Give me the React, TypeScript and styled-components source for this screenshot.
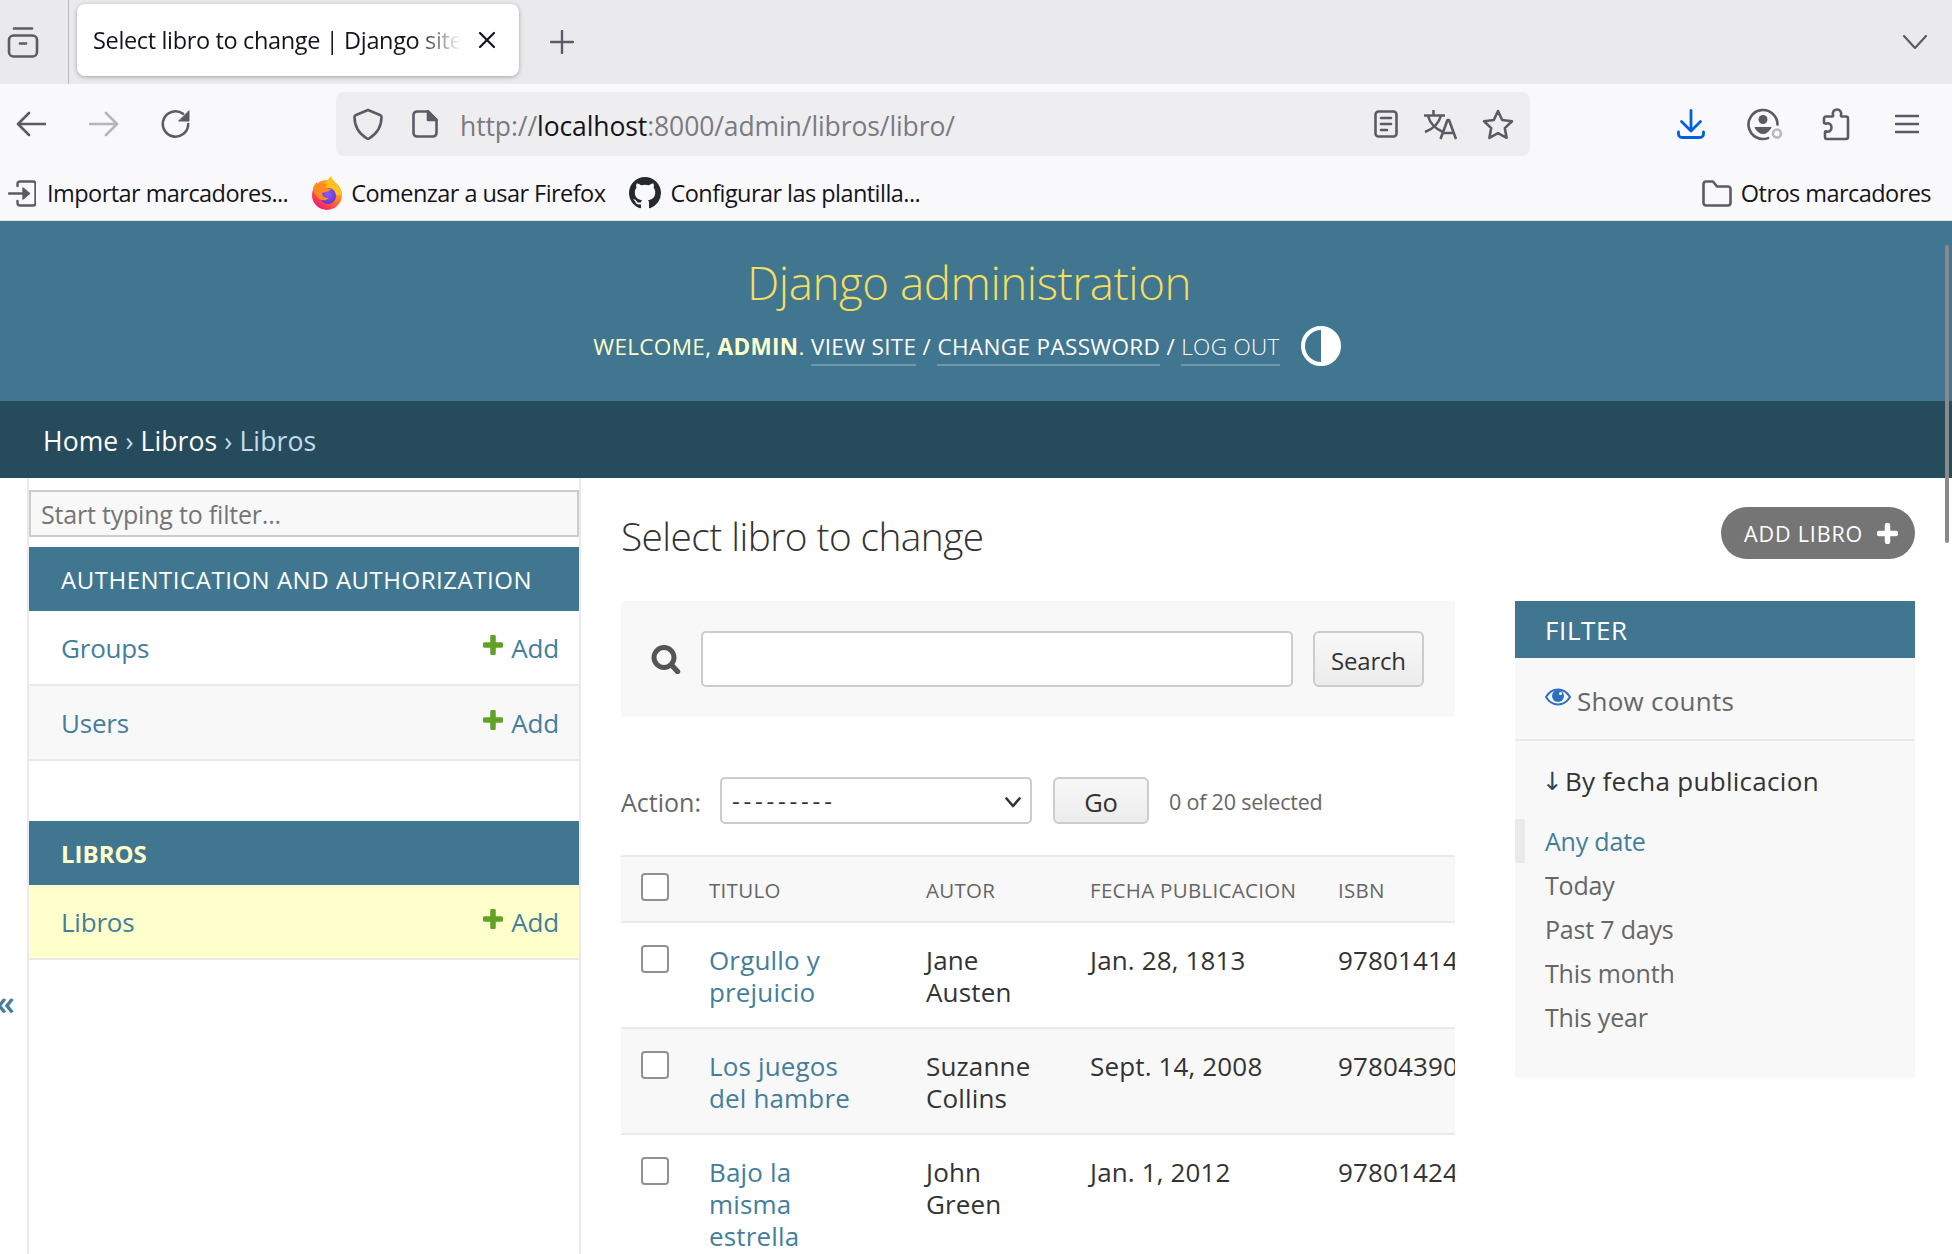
import React from "react";
import styled, { createGlobalStyle } from "styled-components";

const FONT = `"Open Sans", "Noto Sans", sans-serif`;

const GlobalStyle = createGlobalStyle`
  html, body {
    margin: 0;
    padding: 0;
    background: #fff;
    overflow: hidden;
  }
  * {
    box-sizing: border-box;
  }
  body {
    font-family: ${FONT};
  }
`;

const Page = styled.div`
  position: relative;
  width: 1952px;
  height: 1254px;
  overflow: hidden;
  display: flex;
  flex-direction: column;
`;

/* browser chrome */
const TabStrip = styled.div`
  height: 84px;
  flex: none;
  background: #eaeaed;
  display: flex;
  align-items: center;
  padding-left: 7px;
  color: #5b5b66;
`;

const TabDivider = styled.div`
  width: 1px;
  height: 84px;
  background: #b8b8bd;
  margin: 0 8px 0 29px;
`;

const Tab = styled.div`
  width: 442px;
  height: 72px;
  align-self: flex-start;
  margin-top: 4px;
  background: #fff;
  border-radius: 8px;
  box-shadow: 0 1px 4px rgba(0, 0, 0, 0.3);
  display: flex;
  align-items: center;
  padding-left: 16px;
  color: #15141a;
`;

const TabTitle = styled.span`
  width: 368px;
  margin-right: 17px;
  font-size: 23.5px;
  letter-spacing: -0.35px;
  white-space: nowrap;
  overflow: hidden;
  mask-image: linear-gradient(to right, #000 88%, transparent 100%);
`;

const PlusSlot = styled.div`
  margin-left: 31px;
  display: flex;
`;

const ChevronSlot = styled.div`
  margin-left: auto;
  margin-right: 25px;
  display: flex;
`;

const Toolbar = styled.div`
  height: 80px;
  flex: none;
  background: #f9f9fb;
  display: flex;
  align-items: center;
  padding-left: 16px;
  color: #5b5b66;
`;

const IconSlot = styled.div<{ $left?: number }>`
  display: flex;
  flex: none;
  margin-left: ${(p) => p.$left ?? 0}px;
`;

const UrlBar = styled.div`
  width: 1194px;
  height: 64px;
  margin-left: 145px;
  background: #eeeef0;
  border-radius: 8px;
  display: flex;
  align-items: center;
  padding-left: 17px;
`;

const UrlText = styled.div`
  margin-left: 22px;
  font-size: 26.5px;
  letter-spacing: -0.1px;
  color: #7a7a82;
  white-space: nowrap;
  padding-top: 3px;
  b {
    font-weight: 400;
    color: #15141a;
  }
`;

const UrlActions = styled.div`
  margin-left: auto;
  display: flex;
  align-items: center;
  padding-right: 16px;
  gap: 25px;
`;

const BookmarksBar = styled.div`
  height: 57px;
  flex: none;
  background: #f9f9fb;
  border-bottom: 1px solid #e0e0e2;
  display: flex;
  align-items: center;
  padding: 2px 21px 0 8px;
  color: #15141a;
`;

const Bookmark = styled.div<{ $left: number; $gap: number }>`
  display: flex;
  align-items: center;
  margin-left: ${(p) => p.$left}px;
  gap: ${(p) => p.$gap}px;
  font-size: 23.5px;
  letter-spacing: -0.55px;
  white-space: nowrap;
`;

const BookmarkRight = styled(Bookmark)`
  margin-left: auto;
`;

const MutedIcon = styled.span`
  display: flex;
  color: #5b5b66;
`;

/* django header */
const Header = styled.header`
  height: 180px;
  flex: none;
  background: #417690;
  display: flex;
  flex-direction: column;
  align-items: center;
  padding-right: 14px;
`;

const Branding = styled.h1`
  margin: 31px 0 0;
  font-size: 45.7px;
  line-height: 60px;
  font-weight: 300;
  letter-spacing: -0.45px;
  color: #f5dd5d;
`;

const UserTools = styled.div`
  margin: 12px 4px 0 0;
  display: flex;
  align-items: center;
  height: 44px;
  color: #ffc;
`;

const UserText = styled.span`
  font-size: 22.5px;
  letter-spacing: 0.35px;
  text-transform: uppercase;
  white-space: pre;
`;

const Strong = styled.strong`
  font-weight: 700;
`;

const UserLink = styled.a<{ $light?: boolean }>`
  color: #fff;
  font-weight: ${(p) => (p.$light ? 300 : 400)};
  border-bottom: 2px solid rgba(255, 255, 255, 0.25);
  padding-bottom: 2px;
`;

const Slash = styled.span`
  color: #fff;
`;

const ThemeToggle = styled.div`
  display: flex;
  margin-left: 21px;
`;

const Breadcrumbs = styled.nav`
  height: 77px;
  flex: none;
  background: #264b5d;
  display: flex;
  align-items: center;
  padding: 2px 0 0 43px;
  font-size: 26.5px;
  letter-spacing: 0.12px;
  color: #c4dce8;
`;

const CrumbTrail = styled.span`
  white-space: pre;
`;

const Crumb = styled.a`
  color: #fff;
`;

/* body */
const Body = styled.div`
  flex: 1;
  display: flex;
  min-height: 0;
`;

const ToggleColumn = styled.div`
  width: 27px;
  flex: none;
  padding-top: 508px;
  color: #447e9b;
  font-size: 34px;
  font-weight: 600;
  line-height: 32px;
  overflow: hidden;
`;

const ToggleGlyph = styled.span`
  display: block;
  margin-left: -4px;
`;

const Sidebar = styled.nav`
  width: 554px;
  flex: none;
  border-left: 2px solid #eaeaea;
  border-right: 2px solid #eaeaea;
  padding-top: 12px;
`;

const FilterInput = styled.input`
  display: block;
  width: 100%;
  height: 47px;
  padding: 0 10px;
  background: #f8f8f8;
  border: 2px solid #ccc;
  font-family: ${FONT};
  font-size: 25px;
  letter-spacing: -0.2px;
  color: #333;
  outline: none;
  &::placeholder {
    color: #757575;
    opacity: 1;
  }
`;

const AppModule = styled.section`
  margin-top: 10px;
  & + & {
    margin-top: 60px;
  }
`;

const ModuleCaption = styled.div<{ $current?: boolean }>`
  height: 64px;
  display: flex;
  align-items: center;
  padding-left: 32px;
  background: #417690;
  font-size: 24px;
  letter-spacing: ${(p) => (p.$current ? "0" : "0.52px")};
  font-weight: ${(p) => (p.$current ? 700 : 400)};
  color: ${(p) => (p.$current ? "#ffc" : "#fff")};
  text-transform: uppercase;
  white-space: nowrap;
`;

const ModuleRow = styled.div<{ $bg: string }>`
  height: 75px;
  display: flex;
  align-items: center;
  justify-content: space-between;
  padding: 0 20px 0 32px;
  border-bottom: 2px solid #eaeaea;
  background: ${(p) => p.$bg};
  font-size: 26px;
  letter-spacing: -0.2px;
  color: #447e9b;
`;

const AddLink = styled.span`
  display: flex;
  align-items: center;
  gap: 8px;
  padding-top: 1px;
  svg {
    margin-top: -7px;
  }
`;

const Content = styled.main`
  flex: 1;
  min-width: 0;
  padding: 0 37px 0 40px;
`;

const TitleRow = styled.div`
  height: 123px;
  display: flex;
  justify-content: space-between;
  align-items: flex-start;
`;

const PageTitle = styled.h2`
  margin: 33px 0 0;
  font-size: 38.8px;
  line-height: 50px;
  font-weight: 300;
  letter-spacing: -0.55px;
  color: #333;
`;

const AddButton = styled.a`
  margin-top: 29px;
  width: 194px;
  height: 52px;
  border-radius: 26px;
  background: #757575;
  color: #fff;
  font-size: 21.5px;
  letter-spacing: 0.85px;
  display: flex;
  align-items: center;
  padding-left: 23px;
  gap: 14px;
  white-space: nowrap;
`;

const Columns = styled.div`
  display: flex;
  gap: 60px;
  align-items: flex-start;
`;

const ChangeList = styled.div`
  width: 834px;
  flex: none;
  overflow: hidden;
`;

const SearchPanel = styled.div`
  height: 116px;
  background: #f8f8f8;
  display: flex;
  align-items: center;
  padding-left: 30px;
`;

const SearchInput = styled.input`
  width: 592px;
  height: 56px;
  margin-left: 20px;
  background: #fff;
  border: 2px solid #ccc;
  border-radius: 5px;
  outline: none;
`;

const GradientButton = styled.button<{ $width: number; $height: number; $size: number }>`
  width: ${(p) => p.$width}px;
  height: ${(p) => p.$height}px;
  border: 2px solid #ccc;
  border-radius: 6px;
  background: linear-gradient(to bottom, #f8f8f8, #ececec);
  font-family: ${FONT};
  font-size: ${(p) => p.$size}px;
  letter-spacing: -0.2px;
  color: #333;
  padding: 2px 0 0;
`;

const SearchButton = styled(GradientButton)`
  margin-left: 20px;
`;

const ActionsRow = styled.div`
  margin-top: 60px;
  height: 47px;
  display: flex;
  align-items: center;
  font-size: 25px;
  letter-spacing: 0;
  color: #666;
`;

const ActionLabel = styled.span`
  padding-top: 2px;
`;

const SelectWrap = styled.div`
  position: relative;
  margin-left: 19px;
  margin-right: 21px;
  width: 312px;
  height: 47px;
`;

const ActionSelect = styled.select`
  appearance: none;
  width: 100%;
  height: 100%;
  padding: 0 10px;
  background: #fff;
  border: 2px solid #ccc;
  border-radius: 5px;
  font-family: ${FONT};
  font-size: 24px;
  letter-spacing: 3.8px;
  color: #333;
  outline: none;
`;

const SelectChevron = styled.div`
  position: absolute;
  top: 20px;
  right: 11px;
  display: flex;
  pointer-events: none;
`;

const SelectionCount = styled.span`
  margin-left: 20px;
  padding-top: 2px;
  font-size: 21.5px;
  letter-spacing: -0.2px;
`;

const Table = styled.table`
  margin-top: 31px;
  width: 1100px;
  table-layout: fixed;
  border-collapse: collapse;
  border-top: 2px solid #eaeaea;
`;

const HeadRow = styled.tr`
  height: 66px;
  background: #f8f8f8;
  border-bottom: 2px solid #eaeaea;
`;

const Th = styled.th`
  padding: 2px 0 0 20px;
  text-align: left;
  font-size: 20.5px;
  font-weight: 400;
  letter-spacing: 0.3px;
  color: #666;
  white-space: nowrap;
`;

const CheckCell = styled.th`
  padding: 0 0 0 20px;
  text-align: left;
  vertical-align: top;
`;

const Row = styled.tr<{ $even: boolean }>`
  background: ${(p) => (p.$even ? "#f8f8f8" : "#fff")};
  border-bottom: 2px solid #eaeaea;
`;

const Td = styled.td`
  padding: 21px 0 19px 20px;
  vertical-align: top;
  font-size: 26px;
  line-height: 32px;
  letter-spacing: 0.15px;
  color: #333;
  white-space: nowrap;
`;

const TitleLink = styled.a`
  color: #447e9b;
`;

const Checkbox = styled.input.attrs({ type: "checkbox" })<{ $top: number }>`
  appearance: none;
  display: block;
  width: 28px;
  height: 28px;
  margin: ${(p) => p.$top}px 0 0;
  background: #fff;
  border: 2px solid #8f8f9d;
  border-radius: 4px;
`;

const FilterPanel = styled.aside`
  width: 400px;
  height: 477px;
  flex: none;
  background: #f8f8f8;
`;

const FilterHeading = styled.div`
  height: 57px;
  display: flex;
  align-items: center;
  padding-left: 30px;
  background: #417690;
  color: #fff;
  font-size: 26px;
  letter-spacing: 0.6px;
`;

const ShowCounts = styled.div`
  height: 83px;
  display: flex;
  align-items: center;
  gap: 6px;
  padding: 5px 0 0 30px;
  border-bottom: 2px solid #eaeaea;
  font-size: 26px;
  letter-spacing: 0.25px;
  color: #666;
  svg {
    margin-top: -8px;
  }
`;

const FilterTitle = styled.div`
  height: 78px;
  display: flex;
  align-items: center;
  padding: 2px 0 0 30px;
  font-size: 26px;
  letter-spacing: 0.3px;
  color: #333;
  white-space: pre;
`;

const SortArrow = styled.span`
  width: 23px;
  color: #264b5d;
  font-family: "DejaVu Sans", sans-serif;
  font-size: 25px;
  margin-left: -3px;
`;

const FilterItem = styled.div<{ $selected?: boolean }>`
  height: 44px;
  display: flex;
  align-items: center;
  padding-left: ${(p) => (p.$selected ? 20 : 30)}px;
  border-left: ${(p) => (p.$selected ? "10px solid #eaeaea" : "0")};
  font-size: 25px;
  letter-spacing: -0.2px;
  color: ${(p) => (p.$selected ? "#447e9b" : "#666")};
`;

const Scrollbar = styled.div`
  position: absolute;
  right: 3px;
  top: 245px;
  width: 4px;
  height: 298px;
  background: #8a8a8a;
  border-radius: 2px;
`;

/* drawings */
const stroke = {
  fill: "none",
  stroke: "currentColor",
  strokeWidth: 2.6,
  strokeLinecap: "round" as const,
  strokeLinejoin: "round" as const,
};

const ViewIcon = () => (
  <svg width="32" height="32" viewBox="0 0 32 32" {...stroke}>
    <path d="M7 2.5h18" />
    <rect x="2" y="9.5" width="28" height="21" rx="4.5" />
    <path d="M13 17.5h6" />
  </svg>
);

const CloseIcon = () => (
  <svg width="18" height="18" viewBox="0 0 18 18" {...stroke} strokeWidth={2.2}>
    <path d="M2 2l14 14M16 2L2 16" />
  </svg>
);

const PlusIcon = () => (
  <svg width="24" height="24" viewBox="0 0 24 24" {...stroke} strokeWidth={2.4}>
    <path d="M12 1v22M1 12h22" />
  </svg>
);

const ChevronDown = () => (
  <svg width="24" height="14" viewBox="0 0 24 14" {...stroke} strokeWidth={2.2}>
    <path d="M1 1l11 12L23 1" />
  </svg>
);

const ArrowLeft = () => (
  <svg width="30" height="26" viewBox="0 0 30 26" {...stroke}>
    <path d="M2 13h27M13 2L2 13l11 11" />
  </svg>
);

const ArrowRight = () => (
  <svg width="30" height="26" viewBox="0 0 30 26" {...stroke} stroke="#b5b5bb">
    <path d="M28 13H1M17 2l11 11-11 11" />
  </svg>
);

const ReloadIcon = () => (
  <svg width="30" height="30" viewBox="0 0 30 30" {...stroke}>
    <path d="M27.200 15A12.700 12.700 0 1 1 22 4.700" />
    <path d="M28 2v10H18z" fill="currentColor" strokeWidth="1" />
  </svg>
);

const ShieldIcon = () => (
  <svg width="30" height="32" viewBox="0 0 30 32" {...stroke}>
    <path d="M15 2l12 5c1 .4 1.500 1 1.500 2 0 10-5 17-12.500 21.500-.6.300-1.400.300-2 0C6.500 26 1.500 19 1.500 9c0-1 .5-1.600 1.500-2z" />
  </svg>
);

const PageIcon = () => (
  <svg width="26" height="28" viewBox="0 0 26 28" {...stroke}>
    <path d="M5 1.500h11l8.500 8.500v13a3.500 3.500 0 0 1-3.500 3.500H5A3.500 3.500 0 0 1 1.500 23V5A3.500 3.500 0 0 1 5 1.500z" />
    <path d="M16 1.500v8.500h8.500z" fill="currentColor" />
  </svg>
);

const ReaderIcon = () => (
  <svg width="24" height="28" viewBox="0 0 24 28" {...stroke}>
    <rect x="1.500" y="1.500" width="21" height="25" rx="3" />
    <path d="M7 8h10M7 14h10M7 20h6" />
  </svg>
);

const TranslateIcon = () => (
  <svg width="34" height="31" viewBox="0 0 34 31" {...stroke} strokeLinecap="butt">
    <path d="M1 6.500h21M10.500 1v5.500M18 6.500C16 14 10 20 2 23M5 7c2 7 8 13 15 16" />
    <path d="M17.500 30l7-19h1.500l7 19M20 24h11" />
  </svg>
);

const StarIcon = () => (
  <svg width="32" height="31" viewBox="0 0 32 31" {...stroke}>
    <path d="M16 2l4.200 9 9.800 1.300-7.200 6.800 1.800 9.700L16 24.100l-8.600 4.700 1.800-9.700L2 12.300 11.800 11z" />
  </svg>
);

const DownloadIcon = () => (
  <svg width="28" height="30" viewBox="0 0 28 30" {...stroke} stroke="#0061e0" strokeWidth={2.8}>
    <path d="M14 1.500V22M4.500 12.500L14 22l9.500-9.500" />
    <path d="M1.500 23v2a3.500 3.500 0 0 0 3.500 3.500h18a3.500 3.500 0 0 0 3.500-3.500v-2" />
  </svg>
);

const ProfileIcon = () => (
  <svg width="38" height="35" viewBox="0 0 38 35" {...stroke}>
    <path d="M21 31.100A14.500 14.500 0 1 1 30.500 17.500" />
    <circle cx="16" cy="12.500" r="4.500" fill="currentColor" stroke="none" />
    <path d="M7.500 20h17c0 0 0 .5-.5 1.500C22 25 19 27 16 27s-6-2-8-5.500c-.5-1-.5-1.500-.5-1.500z" fill="currentColor" stroke="none" />
    <circle cx="30" cy="26.500" r="4" stroke="#b9b9bf" strokeWidth="2.600" />
  </svg>
);

const PuzzleIcon = () => (
  <svg width="28" height="33" viewBox="0 0 28 33" {...stroke}>
    <path d="M2 10.500a2 2 0 0 1 2-2h6c1 0 1.500-.8 1-1.700C10.200 4.500 12 1.500 15 1.500s4.800 3 4 5.300c-.4.900 0 1.700 1 1.700h4a2 2 0 0 1 2 2V29a2 2 0 0 1-2 2H5a2 2 0 0 1-2-2v-4.500c0-1 .8-1.300 1.700-1C7 24.300 9.500 22.500 9.500 19.500S7 14.700 4.700 15.500c-.9.300-2.700 0-2.700-1z" />
  </svg>
);

const MenuIcon = () => (
  <svg width="24" height="20" viewBox="0 0 24 20" {...stroke}>
    <path d="M1 2h22M1 10h22M1 18h22" />
  </svg>
);

const ImportIcon = () => (
  <svg width="28" height="27" viewBox="0 0 28 27" {...stroke} strokeWidth={2.4}>
    <path d="M9.500 6V4a2.500 2.500 0 0 1 2.500-2.500h13A2.500 2.500 0 0 1 27.500 4v19a2.500 2.500 0 0 1-2.500 2.500H12A2.500 2.500 0 0 1 9.500 23v-2" />
    <path d="M1 13.500h14" />
    <path d="M15 8l6.500 5.500L15 19z" fill="currentColor" strokeWidth="1.500" />
  </svg>
);

const FirefoxLogo = () => (
  <svg width="32" height="34" viewBox="0 0 32 34">
    <defs>
      <linearGradient id="foxBody" x1="0.85" y1="0.1" x2="0.2" y2="0.95">
        <stop offset="0" stopColor="#ffbd1f" />
        <stop offset="0.45" stopColor="#ff7a2f" />
        <stop offset="0.8" stopColor="#ff3750" />
        <stop offset="1" stopColor="#e31587" />
      </linearGradient>
      <radialGradient id="foxCore" cx="0.5" cy="0.4" r="0.7">
        <stop offset="0" stopColor="#9059ff" />
        <stop offset="1" stopColor="#5b2fc4" />
      </radialGradient>
    </defs>
    <circle cx="16" cy="19" r="15" fill="url(#foxBody)" />
    <path d="M13 8C15 5 18 3 20 0c1 3 3 5 6 8 3 3 5 7 5 11H18z" fill="#ffc020" />
    <circle cx="17" cy="20" r="8" fill="url(#foxCore)" />
    <path d="M2 12c1-3 3-5 4-6 0 2 1 3 3 4 2-2 5-3 8-2-2 1-3 3-3 4 3 0 5 1 6 2-3 2-7 2-9 3 0 3 3 5 7 5-3 3-8 3-11 0-3-3-4-6-5-10z" fill="#ff8a1f" />
  </svg>
);

const GithubLogo = () => (
  <svg width="32" height="32" viewBox="0 0 16 16" fill="#24292f">
    <path d="M8 0C3.580 0 0 3.580 0 8c0 3.540 2.290 6.530 5.470 7.590.4.070.55-.17.55-.38 0-.19-.010-.82-.010-1.490-2.010.37-2.530-.49-2.690-.94-.09-.23-.48-.94-.82-1.130-.28-.15-.68-.52-.010-.53.63-.010 1.080.58 1.230.82.720 1.210 1.870.87 2.330.66.070-.52.280-.87.510-1.070-1.780-.2-3.640-.89-3.640-3.950 0-.87.310-1.590.82-2.150-.080-.2-.36-1.020.080-2.120 0 0 .67-.21 2.200.82.640-.18 1.320-.27 2-.27s1.360.09 2 .27c1.530-1.040 2.200-.82 2.200-.82.440 1.100.160 1.920.080 2.120.51.560.82 1.270.82 2.150 0 3.070-1.870 3.750-3.650 3.950.29.25.54.73.54 1.480 0 1.070-.010 1.930-.010 2.200 0 .21.150.46.550.38A8.010 8.010 0 0 0 16 8c0-4.420-3.580-8-8-8z" />
  </svg>
);

const FolderIcon = () => (
  <svg width="30" height="27" viewBox="0 0 30 27" {...stroke}>
    <path d="M4 1.500h7l4 5h11a2.500 2.500 0 0 1 2.500 2.500v14a2.500 2.500 0 0 1-2.500 2.500H4A2.500 2.500 0 0 1 1.500 23V4A2.500 2.500 0 0 1 4 1.500z" />
  </svg>
);

const ThemeIcon = () => (
  <svg width="40" height="40" viewBox="0 0 40 40">
    <circle cx="20" cy="20" r="18" fill="none" stroke="#fff" strokeWidth="4" />
    <path d="M20 2a18 18 0 0 1 0 36z" fill="#fff" />
  </svg>
);

const GreenPlus = () => (
  <svg width="20" height="20" viewBox="0 0 20 20">
    <path d="M10 2v16M2 10h16" stroke="#5fa225" strokeWidth="5.500" strokeLinecap="round" />
  </svg>
);

const WhitePlus = () => (
  <svg width="21" height="21" viewBox="0 0 21 21">
    <path d="M10.500 2.500v16M2.500 10.500h16" stroke="#fff" strokeWidth="5.500" strokeLinecap="round" />
  </svg>
);

const SearchIcon = () => (
  <svg width="30" height="29" viewBox="0 0 30 29" fill="none" stroke="#555" strokeLinecap="round">
    <circle cx="13" cy="12.500" r="10" strokeWidth="5" />
    <path d="M20.500 20l6 6.500" strokeWidth="5.500" />
  </svg>
);

const SelectArrow = () => (
  <svg width="16" height="11" viewBox="0 0 16 11" fill="none" stroke="#333" strokeWidth="2.600" strokeLinecap="round" strokeLinejoin="round">
    <path d="M1.500 1.500L8 9l6.500-7.500" />
  </svg>
);

const EyeIcon = () => (
  <svg width="26" height="18" viewBox="0 0 26 18">
    <path d="M1 9c3-5 7-7.500 12-7.500S22 4 25 9c-3 5-7 7.500-12 7.500S4 14 1 9z" fill="none" stroke="#2b70bf" strokeWidth="2" />
    <circle cx="13" cy="8" r="6" fill="#2b70bf" />
    <circle cx="15.500" cy="5.500" r="1.500" fill="#fff" />
  </svg>
);

const books = [
  { title: ["Orgullo y", "prejuicio"], author: ["Jane", "Austen"], date: "Jan. 28, 1813", isbn: "9780141439518" },
  { title: ["Los juegos", "del hambre"], author: ["Suzanne", "Collins"], date: "Sept. 14, 2008", isbn: "9780439023481" },
  { title: ["Bajo la", "misma", "estrella"], author: ["John", "Green"], date: "Jan. 1, 2012", isbn: "9780142424179" },
];

const lines = (parts: string[]) =>
  parts.map((part, i) => (
    <React.Fragment key={part}>
      {i > 0 && <br />}
      {part}
    </React.Fragment>
  ));

const ModuleLink = ({ name, bg }: { name: string; bg: string }) => (
  <ModuleRow $bg={bg}>
    <span>{name}</span>
    <AddLink>
      <GreenPlus />
      Add
    </AddLink>
  </ModuleRow>
);

const App = () => {
  return (
    <Page>
      <GlobalStyle />
      <TabStrip>
        <ViewIcon />
        <TabDivider />
        <Tab>
          <TabTitle>Select libro to change | Django site admin</TabTitle>
          <CloseIcon />
        </Tab>
        <PlusSlot>
          <PlusIcon />
        </PlusSlot>
        <ChevronSlot>
          <ChevronDown />
        </ChevronSlot>
      </TabStrip>

      <Toolbar>
        <ArrowLeft />
        <IconSlot $left={43}>
          <ArrowRight />
        </IconSlot>
        <IconSlot $left={42}>
          <ReloadIcon />
        </IconSlot>
        <UrlBar>
          <ShieldIcon />
          <IconSlot $left={29}>
            <PageIcon />
          </IconSlot>
          <UrlText>
            http://<b>localhost</b>:8000/admin/libros/libro/
          </UrlText>
          <UrlActions>
            <ReaderIcon />
            <TranslateIcon />
            <StarIcon />
          </UrlActions>
        </UrlBar>
        <IconSlot $left={147}>
          <DownloadIcon />
        </IconSlot>
        <IconSlot $left={42}>
          <ProfileIcon />
        </IconSlot>
        <IconSlot $left={37}>
          <PuzzleIcon />
        </IconSlot>
        <IconSlot $left={45}>
          <MenuIcon />
        </IconSlot>
      </Toolbar>

      <BookmarksBar>
        <Bookmark $left={0} $gap={11}>
          <MutedIcon>
            <ImportIcon />
          </MutedIcon>
          Importar marcadores...
        </Bookmark>
        <Bookmark $left={23} $gap={8}>
          <FirefoxLogo />
          Comenzar a usar Firefox
        </Bookmark>
        <Bookmark $left={24} $gap={9}>
          <GithubLogo />
          Configurar las plantilla...
        </Bookmark>
        <BookmarkRight $left={0} $gap={9}>
          <MutedIcon>
            <FolderIcon />
          </MutedIcon>
          Otros marcadores
        </BookmarkRight>
      </BookmarksBar>

      <Header>
        <Branding>Django administration</Branding>
        <UserTools>
          <UserText>
            Welcome, <Strong>admin</Strong>. <UserLink>View site</UserLink> <Slash>/</Slash>{" "}
            <UserLink>Change password</UserLink> <Slash>/</Slash> <UserLink $light>Log out</UserLink>
          </UserText>
          <ThemeToggle>
            <ThemeIcon />
          </ThemeToggle>
        </UserTools>
      </Header>

      <Breadcrumbs>
        <CrumbTrail>
          <Crumb>Home</Crumb> › <Crumb>Libros</Crumb> › Libros
        </CrumbTrail>
      </Breadcrumbs>

      <Body>
        <ToggleColumn>
          <ToggleGlyph>«</ToggleGlyph>
        </ToggleColumn>
        <Sidebar>
          <FilterInput placeholder="Start typing to filter..." />
          <AppModule>
            <ModuleCaption>Authentication and Authorization</ModuleCaption>
            <ModuleLink name="Groups" bg="#fff" />
            <ModuleLink name="Users" bg="#f8f8f8" />
          </AppModule>
          <AppModule>
            <ModuleCaption $current>Libros</ModuleCaption>
            <ModuleLink name="Libros" bg="#ffc" />
          </AppModule>
        </Sidebar>

        <Content>
          <TitleRow>
            <PageTitle>Select libro to change</PageTitle>
            <AddButton>
              ADD LIBRO
              <WhitePlus />
            </AddButton>
          </TitleRow>
          <Columns>
            <ChangeList>
              <SearchPanel>
                <SearchIcon />
                <SearchInput />
                <SearchButton $width={111} $height={56} $size={24}>
                  Search
                </SearchButton>
              </SearchPanel>
              <ActionsRow>
                <ActionLabel>Action:</ActionLabel>
                <SelectWrap>
                  <ActionSelect defaultValue="">
                    <option value="">---------</option>
                  </ActionSelect>
                  <SelectChevron>
                    <SelectArrow />
                  </SelectChevron>
                </SelectWrap>
                <GradientButton $width={96} $height={47} $size={25.5}>
                  Go
                </GradientButton>
                <SelectionCount>0 of 20 selected</SelectionCount>
              </ActionsRow>
              <Table>
                <colgroup>
                  <col width={68} />
                  <col width={217} />
                  <col width={164} />
                  <col width={248} />
                  <col />
                </colgroup>
                <thead>
                  <HeadRow>
                    <CheckCell>
                      <Checkbox $top={16} />
                    </CheckCell>
                    <Th>TITULO</Th>
                    <Th>AUTOR</Th>
                    <Th>FECHA PUBLICACION</Th>
                    <Th>ISBN</Th>
                  </HeadRow>
                </thead>
                <tbody>
                  {books.map((book, i) => (
                    <Row key={book.isbn} $even={i % 2 === 1}>
                      <CheckCell>
                        <Checkbox $top={22} />
                      </CheckCell>
                      <Td>
                        <TitleLink>{lines(book.title)}</TitleLink>
                      </Td>
                      <Td>{lines(book.author)}</Td>
                      <Td>{book.date}</Td>
                      <Td>{book.isbn}</Td>
                    </Row>
                  ))}
                </tbody>
              </Table>
            </ChangeList>

            <FilterPanel>
              <FilterHeading>FILTER</FilterHeading>
              <ShowCounts>
                <EyeIcon />
                Show counts
              </ShowCounts>
              <FilterTitle>
                <SortArrow>↓</SortArrow>By fecha publicacion
              </FilterTitle>
              <FilterItem $selected>Any date</FilterItem>
              <FilterItem>Today</FilterItem>
              <FilterItem>Past 7 days</FilterItem>
              <FilterItem>This month</FilterItem>
              <FilterItem>This year</FilterItem>
            </FilterPanel>
          </Columns>
        </Content>
      </Body>
      <Scrollbar />
    </Page>
  );
};

export default App;
